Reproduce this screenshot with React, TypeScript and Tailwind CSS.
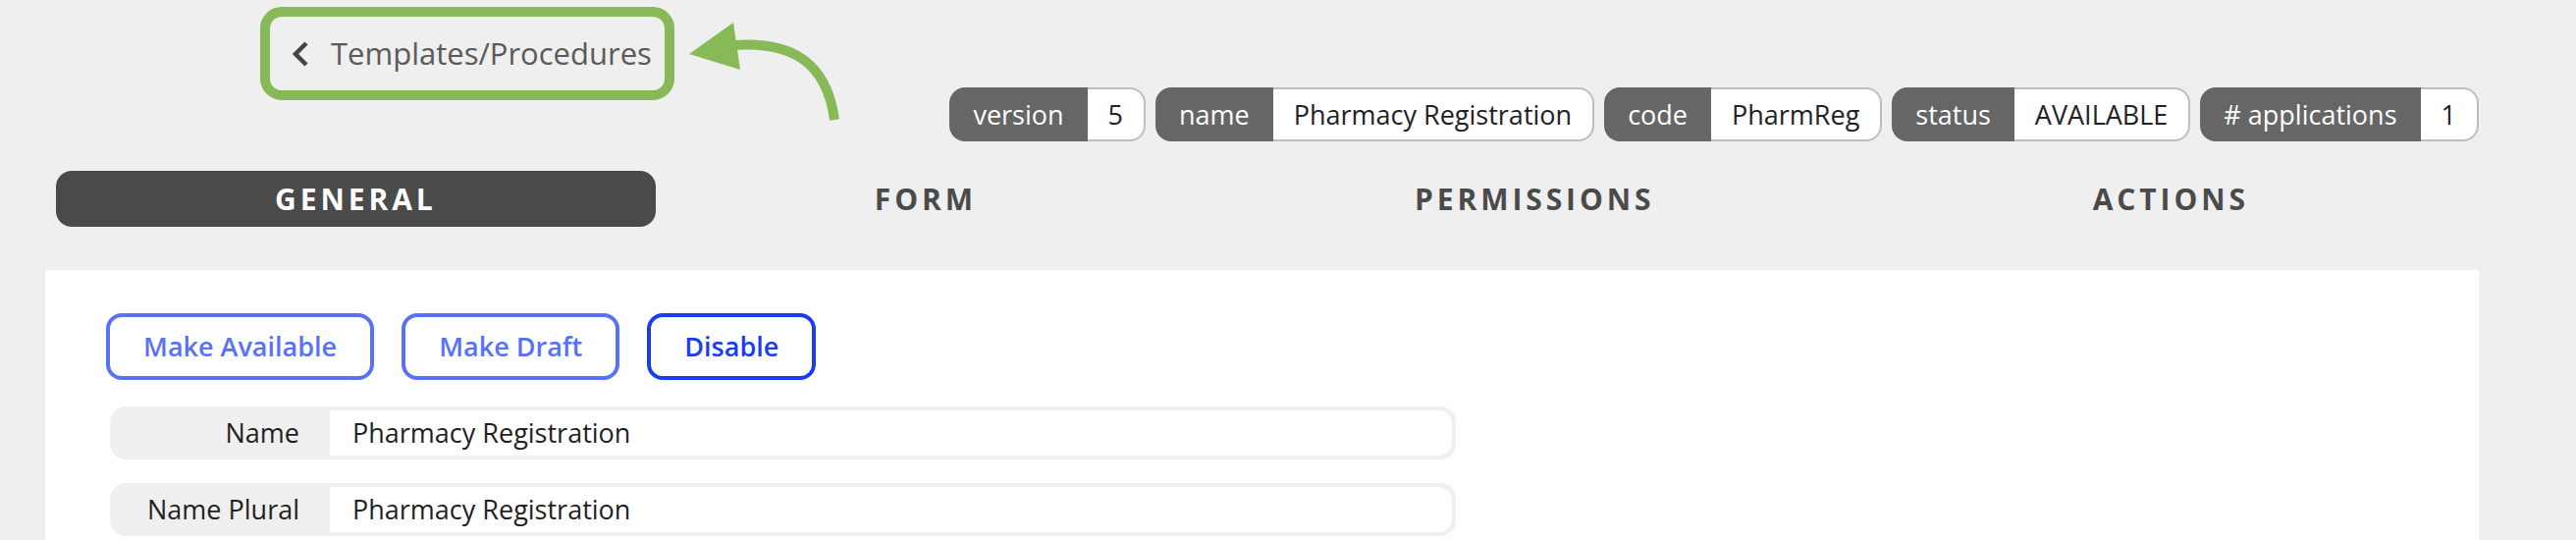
const font = { fontFamily: '"Open Sans", "Noto Sans", sans-serif' }

const pills = [
  { label: 'version', value: '5' },
  { label: 'name', value: 'Pharmacy Registration' },
  { label: 'code', value: 'PharmReg' },
  { label: 'status', value: 'AVAILABLE' },
  { label: '# applications', value: '1' },
]

const tabs = ['GENERAL', 'FORM', 'PERMISSIONS', 'ACTIONS']

function Pill({ label, value }: { label: string; value: string }) {
  return (
    <div className="flex h-[55px] text-[27px] leading-none">
      <div className="flex items-center rounded-l-[16px] bg-[#666666] px-[24px] text-white">
        {label}
      </div>
      <div className="flex items-center rounded-r-[16px] border-2 border-l-0 border-[#bdbdbd] bg-white px-[21px] text-[#222222]">
        {value}
      </div>
    </div>
  )
}

function FieldRow({ label, value }: { label: string; value: string }) {
  return (
    <div className="ml-[4px] flex h-[54px] w-[1371px] rounded-[16px] bg-[#efefef] p-[4px] pl-0 text-[27px] text-[#1f1f1f]">
      <div className="flex w-[224px] shrink-0 items-center justify-end pr-[31px]">{label}</div>
      <div className="flex flex-1 items-center rounded-r-[13px] bg-white px-[23px]">{value}</div>
    </div>
  )
}

export default function App() {
  return (
    <div className="relative min-h-screen bg-[#efefef] pl-[46px] pr-[99px]" style={font}>
      <div className="flex h-[144px] items-start justify-between">
        <button className="ml-[219px] mt-[7px] flex h-[95px] w-[422px] items-center rounded-[22px] border-[10px] border-[#87b957] pl-[22px] text-[31px] text-[#5a5a5a]">
          <svg width="18" height="28" viewBox="0 0 18 28" className="mr-[22px]">
            <polyline points="15,3 4,14 15,25" fill="none" stroke="#444444" strokeWidth="4.5" />
          </svg>
          Templates/Procedures
        </button>
        <div className="mt-[89px] flex gap-[10px]">
          {pills.map((p) => (
            <Pill key={p.label} {...p} />
          ))}
        </div>
      </div>

      {/* annotation arrow */}
      <svg
        className="pointer-events-none absolute left-0 top-0"
        width="900"
        height="140"
        viewBox="0 0 900 140"
      >
        <path d="M748 46 C 805 42, 842 62, 850 122" fill="none" stroke="#87b957" strokeWidth="10" />
        <polygon points="702,55 747,23 754,71" fill="#87b957" />
      </svg>

      <div className="mx-[11px] mt-[30px] flex h-[57px]">
        {tabs.map((t, i) => (
          <div
            key={t}
            className={
              'flex flex-auto items-center justify-center rounded-[16px] text-[30px] font-bold tracking-[0.13em] ' +
              (i === 0 ? 'bg-[#4a4a4a] text-white' : 'text-[#4a4a4a]')
            }
          >
            {t}
          </div>
        ))}
      </div>

      <div className="mt-[44px] h-[300px] bg-white pl-[62px] pt-[44px]">
        <div className="flex gap-[28px] text-[27px] font-semibold">
          <button className="h-[68px] rounded-[16px] border-[4px] border-[#5872f7] px-[34px] text-[#5872f7]">
            Make Available
          </button>
          <button className="h-[68px] rounded-[16px] border-[4px] border-[#5872f7] px-[34px] text-[#5872f7]">
            Make Draft
          </button>
          <button className="h-[68px] rounded-[16px] border-[4px] border-[#1a3cf5] px-[34px] text-[#1a3cf5]">
            Disable
          </button>
        </div>
        <div className="mt-[27px] flex flex-col gap-[24px]">
          <FieldRow label="Name" value="Pharmacy Registration" />
          <FieldRow label="Name Plural" value="Pharmacy Registration" />
        </div>
      </div>
    </div>
  )
}
